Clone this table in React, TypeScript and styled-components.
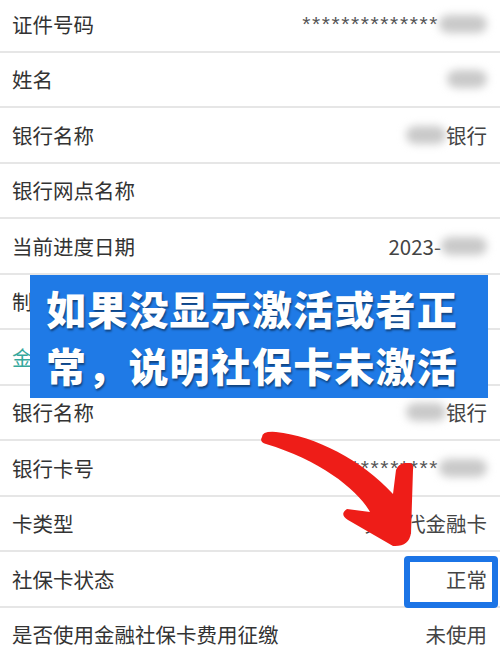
import styled, { createGlobalStyle } from 'styled-components'

const GlobalStyle = createGlobalStyle`
    html, body {
        margin: 0;
        padding: 0;
        background: #fff;
    }
    body {
        font-family: "Noto Sans CJK SC", "Noto Sans", sans-serif;
        overflow: hidden;
    }
`

const Page = styled.div`
    position: relative;
    width: 500px;
    height: 653px;
    overflow: hidden;
    background: #fff;
`

const List = styled.div`
    margin-top: -3px;
    display: flex;
    flex-direction: column;
`

const Row = styled.div`
    height: 55.5px;
    box-sizing: border-box;
    display: flex;
    align-items: center;
    justify-content: space-between;
    padding: 0 13px 0 12px;
    border-bottom: 2px solid #e6e6e6;
    font-size: 20.5px;
    color: #333;
`

const Label = styled.span<{ $section?: boolean }>`
    color: ${p => (p.$section ? '#35a89c' : '#333')};
    white-space: nowrap;
`

const Value = styled.span`
    display: flex;
    align-items: center;
    color: #444;
    white-space: nowrap;
`

const Stars = styled.span`
    font-family: "Liberation Sans", sans-serif;
    font-size: 21px;
    letter-spacing: 1.6px;
    color: #555;
`

const Blur = styled.span<{ $w: number }>`
    display: inline-block;
    width: ${p => p.$w}px;
    height: 18px;
    border-radius: 9px;
    background: #c9c9c9;
    filter: blur(4px);
`

const Overlay = styled.div`
    position: absolute;
    left: 30px;
    top: 275px;
    width: 458px;
    height: 123px;
    box-sizing: border-box;
    padding: 5px 0 0 16px;
    background: #1f7ae6;
    color: #fff;
    font-size: 40px;
    font-weight: 900;
    line-height: 57px;
    letter-spacing: 1.2px;
    text-shadow: 1px 2px 2px rgba(0, 0, 0, 0.45);
    white-space: nowrap;
`

const StatusBox = styled.div`
    position: absolute;
    left: 404px;
    top: 556px;
    width: 94px;
    height: 52px;
    box-sizing: border-box;
    border: 6px solid #1b74e6;
    border-radius: 4px;
`

const Arrow = styled.svg`
    position: absolute;
    left: 0;
    top: 0;
    pointer-events: none;
`

const rows: { label: string, value?: React.ReactNode, section?: boolean }[] = [
    { label: '证件号码', value: <><Stars>**************</Stars><Blur $w={48} /></> },
    { label: '姓名', value: <Blur $w={40} /> },
    { label: '银行名称', value: <><Blur $w={40} />银行</> },
    { label: '银行网点名称' },
    { label: '当前进度日期', value: <>2023-<Blur $w={46} /></> },
    { label: '制卡进度', value: '已领卡' },
    { label: '金融社保卡信息', section: true },
    { label: '银行名称', value: <><Blur $w={40} />银行</> },
    { label: '银行卡号', value: <><Stars>************</Stars><Blur $w={48} /></> },
    { label: '卡类型', value: '第三代金融卡' },
    { label: '社保卡状态', value: '正常' },
    { label: '是否使用金融社保卡费用征缴', value: '未使用' },
]

export default function App() {
    return <Page>
        <GlobalStyle />
        <List>
            {rows.map(({ label, value, section }, i) => (
                <Row key={i}>
                    <Label $section={section}>{label}</Label>
                    <Value>{value}</Value>
                </Row>
            ))}
        </List>
        <Overlay>
            <div>如果没显示激活或者正</div>
            <div>常，说明社保卡未激活</div>
        </Overlay>
        <StatusBox />
        <Arrow width="500" height="653" viewBox="0 0 500 653">
            <path
                fill="#ee1d18"
                d="M 262 437
                   Q 262 431, 276 432
                   C 315 436, 362 460, 393 494
                   L 396 470
                   Q 398 464, 405 463
                   L 410 463
                   Q 414 464, 413 470
                   L 411 533
                   Q 409 547, 393 546
                   L 348 520
                   Q 339 514, 347 509
                   L 370 512
                   C 358 490, 320 460, 266 444
                   Q 259 442, 262 437 Z"
            />
        </Arrow>
    </Page>
}
